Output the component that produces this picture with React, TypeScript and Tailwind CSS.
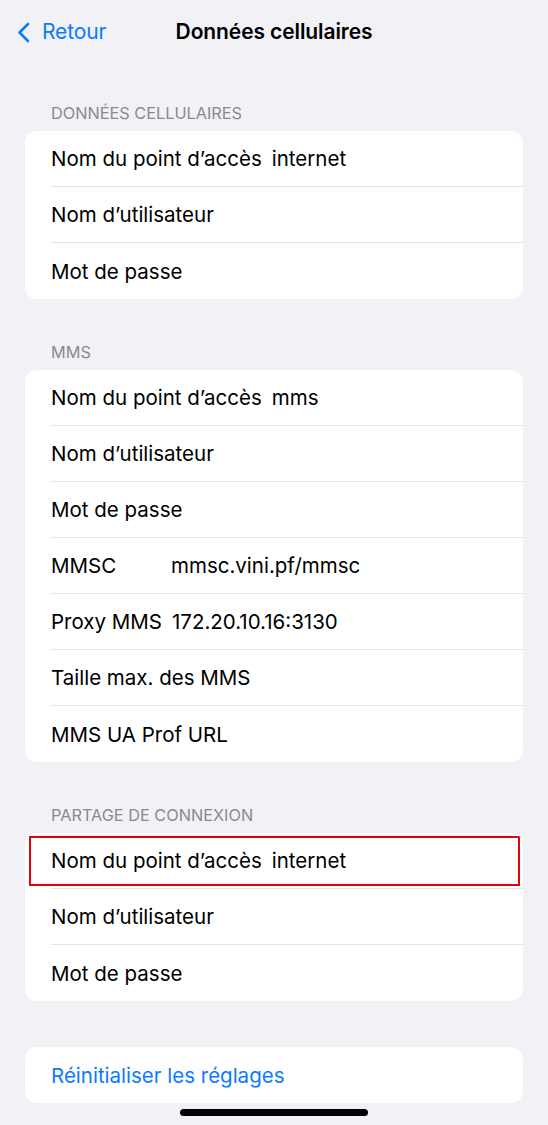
import React from 'react';

type Row = { label: string; value?: string; highlight?: boolean };

const sections: { title: string; rows: Row[] }[] = [
  {
    title: 'DONNÉES CELLULAIRES',
    rows: [
      { label: 'Nom du point d’accès', value: 'internet' },
      { label: 'Nom d’utilisateur' },
      { label: 'Mot de passe' },
    ],
  },
  {
    title: 'MMS',
    rows: [
      { label: 'Nom du point d’accès', value: 'mms' },
      { label: 'Nom d’utilisateur' },
      { label: 'Mot de passe' },
      { label: 'MMSC', value: 'mmsc.vini.pf/mmsc' },
      { label: 'Proxy MMS', value: '172.20.10.16:3130' },
      { label: 'Taille max. des MMS' },
      { label: 'MMS UA Prof URL' },
    ],
  },
  {
    title: 'PARTAGE DE CONNEXION',
    rows: [
      { label: 'Nom du point d’accès', value: 'internet', highlight: true },
      { label: 'Nom d’utilisateur' },
      { label: 'Mot de passe' },
    ],
  },
];

function SettingRow({ row, last }: { row: Row; last: boolean }) {
  return (
    <div className="relative h-[56px] pl-[26px]">
      <div className={cn('flex h-full items-center pt-[2px]', !last && 'border-b border-[#e3e3e8]')}>
        <span className="min-w-[110px] shrink-0 text-[20.5px] text-black">{row.label}</span>
        {row.value && <span className="ml-[10px] text-[20.5px] text-black">{row.value}</span>}
      </div>
      {row.highlight && <div className="absolute left-[4px] right-[3px] top-[3px] bottom-[3px] border-2 border-[#e8000b]" />}
    </div>
  );
}

export default function App() {
  return (
    <div
      className="min-h-[1125px] w-[548px] bg-[#f2f1f6] px-[25px]"
      style={{ fontFamily: 'Inter, "Noto Sans", sans-serif' }}
    >
      <div className="-mx-[25px] grid h-[64px] grid-cols-[1fr_auto_1fr] items-center">
        <div className="flex items-center pl-[17px]">
          <svg width="13" height="21" viewBox="0 0 13 21" fill="none">
            <path d="M11 2L2.5 10.5L11 19" stroke="#0a7aff" strokeWidth="2.6" strokeLinecap="round" strokeLinejoin="round" />
          </svg>
          <span className="ml-[12px] text-[21px] tracking-[-0.1px] text-[#0a7aff]">Retour</span>
        </div>
        <h1 className="text-[21px] font-semibold tracking-[-0.1px] text-black">Données cellulaires</h1>
        <div />
      </div>

      {sections.map((s, i) => (
        <div key={s.title} className={i === 0 ? 'mt-[39px]' : 'mt-[43px]'}>
          <div className="pb-[8px] pl-[26px] text-[16.3px] leading-[20px] text-[#8a8a8e]">{s.title}</div>
          <div className="overflow-hidden rounded-[12px] bg-white">
            {s.rows.map((r, j) => (
              <SettingRow key={j} row={r} last={j === s.rows.length - 1} />
            ))}
          </div>
        </div>
      ))}

      <div className="mt-[46px] flex h-[56px] items-center rounded-[12px] bg-white pl-[26px] pt-[3px]">
        <span className="text-[20.5px] text-[#0a7aff]">Réinitialiser les réglages</span>
      </div>

      <div className="mx-auto mt-[6px] h-[7px] w-[188px] rounded-full bg-black" />
    </div>
  );
}

function cn(...inputs: any[]) {
  return inputs.filter(Boolean).join(' ');
}
